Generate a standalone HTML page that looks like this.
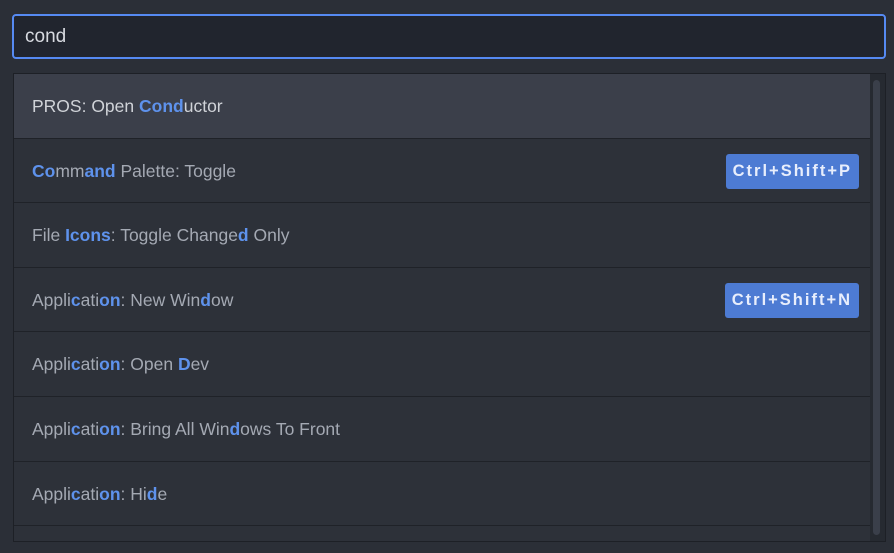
<!DOCTYPE html>
<html><head><style>
body{margin:0;width:894px;height:553px;background:#2b2f37;font-family:"Liberation Sans",sans-serif;overflow:hidden;position:relative}
.inp{position:absolute;left:12px;top:14px;width:870px;height:41px;border:2px solid #568af2;border-radius:4px;background:#21252e;color:#d7dae0;font-size:19px;line-height:41px;box-sizing:content-box}
.inp span{padding-left:11px}
.list{position:absolute;left:13px;top:73px;width:871px;height:467px;border:1px solid #1d2026;background:#2d3139;overflow:hidden}
.row{height:64.6px;border-bottom:1px solid #1f2228;position:relative;color:#a4a9b3;font-size:17.5px;line-height:64px;padding-left:18px;width:856px;box-sizing:border-box;white-space:nowrap}
.row.sel{background:#3b3f4a;color:#d0d3d8}
.row b{color:#5e92ec;font-weight:bold}
.key{position:absolute;right:11px;top:15px;height:35px;line-height:35px;background:#4d7bd3;color:#e8eefc;border-radius:3px;padding:0 7px;font-size:16.5px;letter-spacing:2px;font-weight:bold}
.sb{position:absolute;left:859px;top:6px;width:7px;height:455px;background:#3a3f4a;border-radius:4px}
.rail{position:absolute;left:856px;top:0;width:15px;height:467px;background:#262a31}
</style></head><body>
<div class="inp"><span>cond</span></div>
<div class="list">
<div class="rail"></div><div class="sb"></div>
<div class="row sel">PROS: Open <b>Cond</b>uctor</div>
<div class="row"><b>Co</b>mm<b>and</b> Palette: Toggle<span class="key">Ctrl+Shift+P</span></div>
<div class="row">File <b>Icons</b>: Toggle Change<b>d</b> Only</div>
<div class="row">Appli<b>c</b>ati<b>on</b>: New Win<b>d</b>ow<span class="key">Ctrl+Shift+N</span></div>
<div class="row">Appli<b>c</b>ati<b>on</b>: Open <b>D</b>ev</div>
<div class="row">Appli<b>c</b>ati<b>on</b>: Bring All Win<b>d</b>ows To Front</div>
<div class="row">Appli<b>c</b>ati<b>on</b>: Hi<b>d</b>e</div>
<div class="row"></div>
</div>
</body></html>
